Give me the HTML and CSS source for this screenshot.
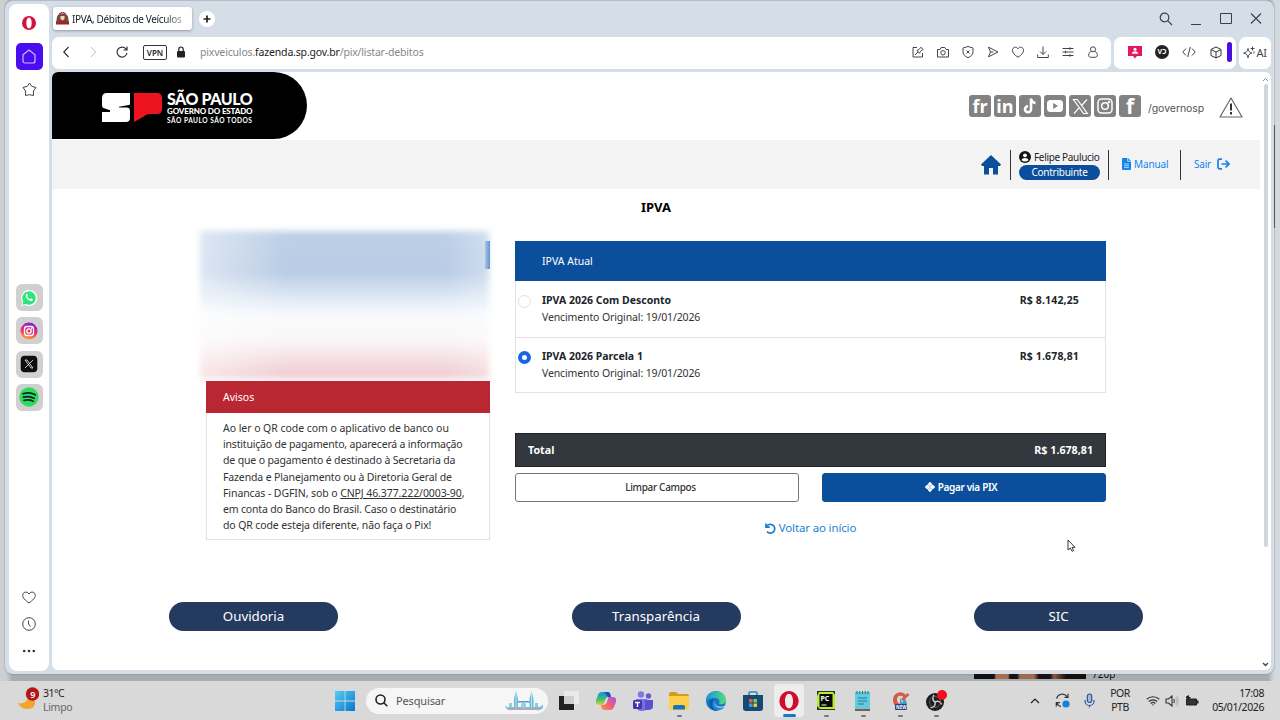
FILE: index.html
```html
<!DOCTYPE html>
<html lang="pt-BR">
<head>
    <meta charset="UTF-8">
    <meta name="viewport" content="width=device-width, initial-scale=1.0">
    <title>IPVA, Débitos de Veículos</title>
    <link rel="stylesheet" href="styles.css">
</head>
<body>
    <div class="desktop">
        <div class="window">
            <aside class="sidebar">
                <svg class="side-opera" width="14" height="14" viewBox="0 0 14 14"><path fill="#d4103c" fill-rule="evenodd" d="M7 0a7 7 0 1 0 0 14A7 7 0 0 0 7 0zm0 1.6c1.6 0 2.7 2.2 2.7 5.4S8.600 12.400 7 12.400 4.300 10.200 4.300 7 5.400 1.600 7 1.600z"/></svg>
                <div class="side-home"><svg width="14" height="15" viewBox="0 0 14 15" fill="none" stroke="#c9bcff" stroke-width="1.200" stroke-linejoin="round"><path d="M1 5.800 7 1l6 4.800V12a2 2 0 0 1-2 2H3a2 2 0 0 1-2-2z"/></svg></div>
                <svg class="side-star" width="15" height="15" viewBox="0 0 15 15" fill="none" stroke="#444" stroke-linejoin="round"><path d="M7.500 1 9.700 4.300 14 5.500 11.400 9 11.500 13.500 7.500 12.700 3.500 13.500 3.600 9 1 5.500 5.300 4.300z"/></svg>
                <div class="side-apps">
                    <div class="side-app"><svg width="18" height="18" viewBox="0 0 18 18"><path d="M1 17l1.200-4.300A8 8 0 1 1 5.500 16z" fill="#fff"/><path d="M2.300 15.800l1-3.300a6.700 6.700 0 1 1 2.500 2.400z" fill="#2ee57b"/><path d="M6.200 5.200c.8-.8 1.300-.1 1.600.7.300.8-.8 1-.5 1.500.6 1.300 1.500 2.100 2.700 2.700.6.200.9-1 1.500-.7 1.900.7 1.600 1.200.9 2-2.300 2.300-8.500-3.500-6.200-6.200z" fill="#fff"/></svg></div>
                    <div class="side-app"><svg width="18" height="18" viewBox="0 0 18 18"><defs><linearGradient id="insta" x1="0.300" y1="1" x2="0.600" y2="0"><stop offset="0" stop-color="#ffb02e"/><stop offset="0.450" stop-color="#f0306a"/><stop offset="1" stop-color="#7a22d8"/></linearGradient></defs><circle cx="9" cy="9" r="8.500" fill="url(#insta)"/><rect x="4.500" y="4.500" width="9" height="9" rx="2.500" fill="none" stroke="#fff" stroke-width="1.300"/><circle cx="9" cy="9" r="2.200" fill="none" stroke="#fff" stroke-width="1.300"/><circle cx="11.700" cy="6.300" r=".7" fill="#fff"/></svg></div>
                    <div class="side-app"><svg width="18" height="18" viewBox="0 0 18 18"><rect x=".7" y=".7" width="16.600" height="16.600" rx="4" fill="#0c0e10"/><path d="M5 5h2l6 8h-2zM13 5l-8 8" stroke="#ddd" stroke-width=".9" fill="none"/></svg></div>
                    <div class="side-app"><svg width="20" height="20" viewBox="0 0 20 20"><circle cx="10" cy="10" r="9.700" fill="#2fdc60"/><path d="M4 6.800c4-1.300 8.500-1 12.300 1M4.500 10.200c3.500-1 7.500-.7 10.700 1M5 13.300c3-.8 6.500-.5 9.200.9" fill="none" stroke="#123" stroke-width="1.800" stroke-linecap="round"/></svg></div>
                </div>
                <div class="side-bottom">
                    <svg width="14" height="13" viewBox="0 0 14 13" fill="none" stroke="#444"><path d="M7 12C3 9 .7 7 .7 4.300.7 1 5 -.3 7 3c2-3.300 6.300-2 6.300 1.300C13.300 7 11 9 7 12z"/></svg>
                    <svg width="14" height="14" viewBox="0 0 14 14" fill="none" stroke="#444"><circle cx="7" cy="7" r="6.300"/><path d="M6.500 3.500V7l2 2.500"/></svg>
                    <svg width="14" height="14" viewBox="0 0 14 14" fill="#333"><circle cx="2.200" cy="7" r="1.300"/><circle cx="7" cy="7" r="1.300"/><circle cx="11.800" cy="7" r="1.300"/></svg>
                </div>
            </aside>

            <div class="browser">
                <div class="tabs">
                    <div class="tab">
                        <svg width="13" height="13" viewBox="0 0 13 13"><path d="M1 5C1 .5 12 .5 12 5l1 6H0z" fill="#426044"/><circle cx="6.500" cy="5.500" r="4" fill="#a83232"/><path d="M0 9.500h13v3H0z" fill="#a51f24"/><path d="M4.500 4h4v3l-2 1.500-2-1.500z" fill="#ddb"/><path d="M3 2 6.500 0 10 2" stroke="#333" fill="none"/></svg>
                        <span>IPVA, Débitos de Veículos</span>
                    </div>
                    <div class="new-tab"><svg width="8" height="8" viewBox="0 0 8 8"><path d="M4 .5v7M.5 4h7" stroke="#222" stroke-width="1.700"/></svg></div>
                    <div class="window-buttons">
                        <svg width="14" height="14" viewBox="0 0 14 14" fill="none" stroke="#3b4046" stroke-width="1.200"><circle cx="5.500" cy="5.500" r="4.300"/><path d="M8.700 8.700 13 13"/></svg>
                        <svg width="14" height="14" viewBox="0 0 14 14" stroke="#3b4046"><path d="M2 12.500h10"/></svg>
                        <svg width="14" height="14" viewBox="0 0 14 14" fill="none" stroke="#3b4046"><path d="M1.500 1.500h11v10h-11z"/></svg>
                        <svg width="14" height="14" viewBox="0 0 14 14" stroke="#3b4046" stroke-width="1.100"><path d="M2 1.500l10 10M12 1.500l-10 10"/></svg>
                    </div>
                </div>

                <div class="toolbar">
                    <div class="address">
                        <svg width="14" height="14" viewBox="0 0 14 14" fill="none" stroke="#333" stroke-width="1.200"><path d="M8.500 2 3.800 7l4.700 5"/></svg>
                        <svg class="forward" width="14" height="14" viewBox="0 0 14 14" fill="none" stroke="#bbb"><path d="M5 2l4.700 5L5 12"/></svg>
                        <svg class="reload" width="14" height="14" viewBox="0 0 14 14" fill="none" stroke="#333" stroke-width="1.200"><path d="M12 8a5 5 0 1 1-1.200-4.300L12 5M12 1.500V5H8.500"/></svg>
                        <span class="vpn">VPN</span>
                        <svg class="lock" width="10" height="12" viewBox="0 0 10 12"><rect x="1" y="5" width="8" height="6.500" rx="1" fill="#222"/><path d="M2.800 5V3.200a2.200 2.200 0 0 1 4.400 0V5" fill="none" stroke="#222" stroke-width="1.200"/></svg>
                        <span class="url">pixveiculos.<b>fazenda.sp.gov.br</b>/pix/listar-debitos</span>
                        <div class="address-icons">
                            <svg viewBox="0 0 12 12"><path d="M5 1.500H1v9.500h9.500V7M3 9l3-3M5 4.500l2.500 2.800 1-2L11 3.500 9 1.200 7 3.500z"/></svg>
                            <svg viewBox="0 0 12 12"><path d="M.5 3.500H3l1.200-2h3.600l1.200 2h2.500v7.500H.5z"/><circle cx="6" cy="6.800" r="2.200"/></svg>
                            <svg viewBox="0 0 12 12"><path d="M6 .5 11 2v4c0 2.500-2 4.500-5 5.700C3 10.500 1 8.500 1 6V2zM4.500 4.500l3 3M7.500 4.500l-3 3"/></svg>
                            <svg viewBox="0 0 12 12"><path d="M1.500 1.200 11 6l-9.500 4.800 2-4.800zM3.500 6h3"/></svg>
                            <svg viewBox="0 0 12 12"><path d="M6 11.300C2.500 8.700.5 7 .5 4.300.5 1 4.500 0 6 2.800 7.500 0 11.500 1 11.500 4.300 11.500 7 9.500 8.700 6 11.300z"/></svg>
                            <svg viewBox="0 0 12 12"><path d="M6 .5v7.800M3 5.500l3 3 3-3M.7 8.500v3h10.600v-3"/></svg>
                            <svg viewBox="0 0 12 12"><path d="M.5 2.500h11M.5 6h11M.5 9.500h11M8 1.200v2.600M3.500 4.700v2.600M8 8.200v2.600"/></svg>
                            <svg viewBox="0 0 12 12"><circle cx="6" cy="3.300" r="2.500"/><path d="M4 5.500C1 6.500 1 11.300 3.500 11.300h5C11 11.300 11 6.500 8 5.500"/></svg>
                        </div>
                    </div>
                    <div class="extensions">
                        <svg width="14" height="13" viewBox="0 0 14 13"><path d="M0 0h14v10H9l-2 2.500L5 10H0z" fill="#e5185d"/><circle cx="7" cy="3.200" r="1.500" fill="#fff"/><path d="M3.800 7.800C4 4.500 10 4.500 10.200 7.800z" fill="#fff"/></svg>
                        <span class="vd">VƆ</span>
                        <svg width="14" height="12" viewBox="0 0 14 12" fill="none" stroke="#444"><path d="M4 2.500.8 6 4 9.500M10 2.500 13.200 6 10 9.500M8.300 1 5.700 11"/></svg>
                        <svg width="12" height="13" viewBox="0 0 12 13" fill="none" stroke="#333"><path d="M6 1l5 2.500v6L6 12 1 9.500v-6zM1 3.500 6 6l5-2.500M6 6v6"/></svg>
                        <i class="purple-bar"></i>
                    </div>
                    <div class="ai">
                        <svg width="13" height="13" viewBox="0 0 13 13" fill="none" stroke="#444"><path d="M5 2.500C5.500 5.500 6.500 6.300 9 7 6.500 7.700 5.500 8.500 5 11.800 4.500 8.500 3.500 7.700.7 7 3.500 6.300 4.500 5.500 5 2.500zM9.500.5v4M7.500 2.500h4M11 5.500v2"/></svg>AI
                    </div>
                </div>

                <div class="viewport">
                    <div class="page">
                        <header class="header">
                            <div class="logo">
                                <svg width="61" height="30" viewBox="0 0 61 30"><path d="M5 0h23v11q0 3-3 3 3 1 3 4v7q0 4-4 4H0V19h8v-2H5q-5 0-5-5V5q0-5 5-5z" fill="#fff"/><path d="M0 14.500 8 17.300v1L0 19zM28 14.500H17v-.8l11-2z" fill="#000"/><path d="M32 0h23q5 0 5 5v11q0 5-5 5h-7q-4 0-7 3l-9 5z" fill="#ed1420"/></svg>
                                <div class="logo-text">
                                    <b>SÃO PAULO</b>
                                    <strong>GOVERNO DO ESTADO</strong>
                                    <small>SÃO PAULO SÃO TODOS</small>
                                </div>
                            </div>
                            <div class="social">
                                <span>fr</span>
                                <span>in</span>
                                <span><svg width="16" height="18" viewBox="0 0 16 18" fill="none" stroke="#fff" stroke-width="2.600"><path d="M9 1.500v10.700a3 3 0 1 1-3-3M9 2c.5 2.500 2 3.700 4.500 4"/></svg></span>
                                <span><svg width="16" height="12" viewBox="0 0 16 12"><rect width="16" height="12" rx="3.500" fill="#fff"/><path d="M6.200 3v6l4.800-3z" fill="#828282"/></svg></span>
                                <span><svg width="17" height="17" viewBox="0 0 17 17" fill="none" stroke="#fff" stroke-width="1.200"><path d="M1.500 1.500h3.800l10 14h-3.800zM15 1.500 9.600 7.500M7.300 9.700 2 15.500"/></svg></span>
                                <span><svg width="16" height="16" viewBox="0 0 16 16" fill="none" stroke="#fff" stroke-width="1.500"><rect x="1" y="1" width="14" height="14" rx="3.500"/><circle cx="8" cy="8" r="3.300"/><circle cx="12" cy="4" r=".5"/></svg></span>
                                <span class="face">f</span>
                                <em>/governosp</em>
                                <svg class="warn" width="24" height="21" viewBox="0 0 24 21" fill="none" stroke="#666" stroke-width="1.200" stroke-linejoin="round"><path d="M12 1 23 20H1z"/><path d="M12 6.500v7M12 15v2.500" stroke="#333" stroke-width="2"/></svg>
                            </div>
                        </header>

                        <nav class="navbar">
                            <svg class="home" width="20" height="20" viewBox="0 0 20 20" fill="#0b4f9c"><path d="M10 0 20 9.500 19 11H17v8.500h-5V13H8v6.500H3V11H1L0 9.500z"/></svg>
                            <div class="user">
                                <div class="user-name"><svg width="12" height="12" viewBox="0 0 12 12"><circle cx="6" cy="6" r="6" fill="#151515"/><circle cx="6" cy="4.300" r="1.900" fill="#fff"/><path d="M2.500 9.300c.6-3 6.400-3 7 0C7.500 11 4.500 11 2.500 9.300z" fill="#fff"/></svg><span>Felipe Paulucio</span></div>
                                <div class="badge">Contribuinte</div>
                            </div>
                            <a class="manual"><svg width="9" height="12" viewBox="0 0 9 12"><path d="M1 0h5l3 3v8q0 1-1 1H1q-1 0-1-1V1q0-1 1-1z" fill="#1184ee"/><path d="M5.700 0v3.300H9M2 6h5M2 7.800h5M2 9.600h5" stroke="#d5eaff" stroke-width=".8" fill="none"/></svg><span>Manual</span></a>
                            <a class="exit"><span>Sair</span><svg width="13" height="12" viewBox="0 0 13 12" fill="none" stroke="#1184ee" stroke-width="1.700"><path d="M5 1.200H2.500Q1 1.200 1 2.700v6.600q0 1.500 1.500 1.500H5M4.500 6h7M8.500 2.700 12 6 8.500 9.300"/></svg></a>
                        </nav>

                        <h1>IPVA</h1>

                        <main class="content">
                            <section class="left">
                                <div class="vehicle">
                                    <div class="vehicle-blur"></div>
                                    <i class="vehicle-edge"></i>
                                </div>
                                <h2>Avisos</h2>
                                <p>
                                    <span class="l1">Ao ler o QR code com o aplicativo de banco ou</span><br>
                                    <span class="l2">instituição de pagamento, aparecerá a informação</span><br>
                                    <span class="l3">de que o pagamento é destinado à Secretaria da</span><br>
                                    <span class="l4">Fazenda e Planejamento ou à Diretoria Geral de</span><br>
                                    <span class="l5">Financas - DGFIN, sob o <u>CNPJ 46.377.222/0003-90</u>,</span><br>
                                    <span class="l6">em conta do Banco do Brasil. Caso o destinatário</span><br>
                                    <span class="l7">do QR code esteja diferente, não faça o Pix!</span>
                                </p>
                            </section>

                            <section class="right">
                                <div class="debts">
                                    <h2>IPVA Atual</h2>
                                    <div class="debt">
                                        <i class="radio"></i>
                                        <div><b>IPVA 2026 Com Desconto</b><span>Vencimento Original: 19/01/2026</span></div>
                                        <strong>R$ 8.142,25</strong>
                                    </div>
                                    <div class="debt">
                                        <i class="radio checked"></i>
                                        <div><b>IPVA 2026 Parcela 1</b><span>Vencimento Original: 19/01/2026</span></div>
                                        <strong>R$ 1.678,81</strong>
                                    </div>
                                </div>
                                <div class="total"><span>Total</span><span>R$ 1.678,81</span></div>
                                <div class="actions">
                                    <button class="clear">Limpar Campos</button>
                                    <button class="pay"><svg width="10" height="10" viewBox="0 0 10 10"><path d="M5 0l5 5-5 5-5-5z" fill="#fff" stroke="#fff" stroke-linejoin="round" stroke-width=".5"/><path d="M2 2.500h1L5 4.500l2-2h1M2 7.500h1L5 5.500l2 2h1" fill="none" stroke="#0b4f9c" stroke-width=".5"/></svg>Pagar via PIX</button>
                                </div>
                                <a class="back"><svg width="11" height="11" viewBox="0 0 11 11" fill="none" stroke="#1b7fd0" stroke-width="1.700"><path d="M1 .5v3.700h3.800M1.300 4A4.400 4.400 0 1 1 2 8.600"/></svg><span>Voltar ao início</span></a>
                            </section>
                        </main>

                        <footer class="footer">
                            <a>Ouvidoria</a>
                            <a>Transparência</a>
                            <a>SIC</a>
                        </footer>
                    </div>
                    <div class="scrollbar">
                        <svg width="7" height="5" viewBox="0 0 7 5" fill="none" stroke="#888"><path d="M1 4l2.500-2.500L6 4"/></svg>
                        <i></i>
                        <svg class="down" width="7" height="5" viewBox="0 0 7 5" fill="none" stroke="#444" stroke-width="1.400"><path d="M1 1l2.500 2.500L6 1"/></svg>
                    </div>
                </div>
            </div>
        </div>

        <!-- janela que fica por trás do navegador -->
        <div class="behind-photo"></div>
        <div class="behind-text">720p</div>
        <div class="behind-scroll"></div>
        <svg class="cursor" width="9" height="13" viewBox="0 0 9 13"><path d="M1 1v10l2.300-2 1.800 3.300 1.500-.8-1.600-3.200H8z" fill="#fff" stroke="#222" stroke-width=".9"/></svg>

        <div class="taskbar">
            <div class="weather">
                <svg width="21" height="24" viewBox="0 0 21 24"><path d="M0 16c6 1 9-1 10-6 10 0 9 12 0 12-5 0-8-2-10-6z" fill="#f5a52d"/><circle cx="14.500" cy="7" r="6.700" fill="#b3161d"/><text x="14.500" y="10.600" text-anchor="middle" class="weather-count">9</text></svg>
                <div><span>31°C</span><span class="muted">Limpo</span></div>
            </div>
            <div class="start">
                <svg width="20" height="20" viewBox="0 0 20 20"><defs><linearGradient id="win" x1="0" y1="0" x2="1" y2="1"><stop offset="0" stop-color="#55cdf5"/><stop offset="1" stop-color="#0878cd"/></linearGradient></defs><path d="M0 0h9.600v9.600H0zM10.400 0H20v9.600h-9.600zM0 10.400h9.600V20H0zM10.400 10.400H20V20h-9.600z" fill="url(#win)"/></svg>
            </div>
            <div class="search">
                <svg width="13" height="13" viewBox="0 0 13 13" fill="none" stroke="#222" stroke-width="1.600"><circle cx="5.500" cy="5.500" r="4.500"/><path d="M8.800 8.800 12.300 12.300"/></svg>
                <span>Pesquisar</span>
                <svg class="towers" width="40" height="21" viewBox="0 0 40 21"><path d="M1 15q2 3 5 2h28q4 0 5-3v4q-3 3-7 2H8q-6 1-7-5z" fill="#79bfd6"/><path d="M10 18V9l2-8 2 8v9zM25.500 18V9l2-8 2 8v9z" fill="#69b9d9"/><path d="M12 2v16M27.500 2v16" stroke="#b8e3ef"/><path d="M14 11h11.500v1.500H14z" fill="#4aa0c6"/><path d="M17 18v-4l2.500-2 2.500 2v4zM5 17v-4h3v4zM31 17v-4h3v4z" fill="#91cfe0"/><path d="M4 19h32" stroke="#d39c9f" stroke-width="1.300"/></svg>
            </div>
            <div class="apps">
                <div class="app"><svg width="20" height="20" viewBox="0 0 20 20"><path d="M0 5h15v14H0z" fill="#222"/><path d="M5 0h15v13H5z" fill="#ececec" opacity=".85"/></svg></div>
                <div class="app"><svg width="20" height="20" viewBox="0 0 20 20"><defs><linearGradient id="cop1" x1="0" y1="0" x2="0" y2="1"><stop offset="0" stop-color="#168fe0"/><stop offset=".6" stop-color="#41c36b"/><stop offset="1" stop-color="#e8cf30"/></linearGradient><linearGradient id="cop2" x1="1" y1="0" x2="0" y2="1"><stop offset="0" stop-color="#9b5ae0"/><stop offset=".5" stop-color="#ef5a86"/><stop offset="1" stop-color="#fb9447"/></linearGradient></defs><path d="M6 1h6q2 0 2.700 3L15 6h-3q-2 0-3 3l-1.500 5H3q-4 0-3-5l2-5q1-3 4-3z" fill="url(#cop1)"/><path d="M14 19H8q-2 0-2.700-3L5 14h3q2 0 3-3l1.500-5H17q4 0 3 5l-2 5q-1 3-4 3z" fill="url(#cop2)"/><path d="M8 1h4q2 0 3 5h-3z" fill="#1b4fc4"/></svg></div>
                <div class="app"><svg width="20" height="20" viewBox="0 0 20 20"><circle cx="8" cy="3.500" r="3.200" fill="#8077e8"/><circle cx="15.500" cy="5" r="2.700" fill="#625ad7"/><path d="M3 8h11v8q0 4-5 4t-6-4z" fill="#776ee2"/><path d="M12 9h8v6q0 4-5 4h-3z" fill="#5a50d0"/><rect y="9" width="9" height="9" rx="1.500" fill="#3f36ae"/><path d="M2 11.500h5M4.500 11.500V16" stroke="#fff" stroke-width="1.400"/></svg></div>
                <div class="app open"><svg width="20" height="20" viewBox="0 0 20 20"><path d="M0 3q0-2 2-2h5l2 2h9q2 0 2 2v4H0z" fill="#d99a1c"/><path d="M0 5h20v12q0 2-2 2H2q-2 0-2-2z" fill="#fdd04c"/><path d="M4 18.500v-3q0-1.500 2-1.500h8q2 0 2 1.500v3z" fill="#1973b9"/></svg></div>
                <div class="app"><svg width="20" height="20" viewBox="0 0 20 20"><defs><linearGradient id="edge" x1="0" y1="0" x2="1" y2="0"><stop offset="0" stop-color="#1894dc"/><stop offset="1" stop-color="#57dc79"/></linearGradient></defs><circle cx="10" cy="10" r="10" fill="#1278c8"/><path d="M0 9C1-3 20-2 20 9c0 4-4 5-7 4 1-2 1-6-4-6-4 0-8 1-9 4z" fill="url(#edge)"/><path d="M9.500 10c-2.500 4 3 7 9 5l1.500-1-1 3-4 3c-6 0-9-7-5.500-10z" fill="#d9d9d9"/><path d="M5 17C1 11 5 7 8 8c-3 3-2 8 3 12-2 0-4-1-6-3z" fill="#0c59a4"/><path d="M9.500 10c-3 5 3 8.500 9 6-4 5-11 4-12-1-.3-3 1-5 3-5z" fill="#1a8ad8"/></svg></div>
                <div class="app"><svg width="20" height="20" viewBox="0 0 20 20"><path d="M6 4V2q0-1 1-1h6q1 0 1 1v2" fill="none" stroke="#2689c9" stroke-width="1.600"/><path d="M0 4h20v13q0 3-3 3H3q-3 0-3-3z" fill="#154a75"/><path d="M6 8h3.500v3.500H6z" fill="#f25b30"/><path d="M10.500 8H14v3.500h-3.500z" fill="#8bc83f"/><path d="M6 12.500h3.500V16H6z" fill="#26a2e5"/><path d="M10.500 12.500H14V16h-3.500z" fill="#fbc229"/></svg></div>
                <div class="app active"><svg width="20" height="20" viewBox="0 0 20 20"><path fill="#d10d2e" fill-rule="evenodd" d="M10 0a9.700 10 0 1 0 0 20 9.700 10 0 0 0 0-20zm0 2.700c2.500 0 4 3.100 4 7.300s-1.500 7.300-4 7.300S6 14.200 6 10s1.500-7.300 4-7.300z"/></svg></div>
                <div class="app open"><svg width="18" height="19" viewBox="0 0 18 19"><path d="M0 0h18v19H0z" fill="#263421"/><path d="M2 1h14l2 3v14H3l-3-3V5z" fill="#b9ee2f"/><path d="M2.500 3h13v13h-13z" fill="#080b08"/><text x="3.500" y="9.500" class="pc">PC</text><path d="M4.500 14h5" stroke="#fff"/></svg></div>
                <div class="app open"><svg width="17" height="20" viewBox="0 0 17 20"><path d="M1 1h15v17H1z" fill="#62cbe0"/><path d="M1 18h15v2H1z" fill="#8b5a45"/><path d="M3 0v3M5.700 0v3M8.500 0v3M11.200 0v3M14 0v3" stroke="#286f89"/><path d="M4 7h9M4 10h9M4 13h6" stroke="#237c94" stroke-width="1.200"/></svg></div>
                <div class="app open"><svg class="ccleaner" width="18" height="20" viewBox="0 0 18 20"><path d="M14 4C8-2 1 3 1 9s5 9 10 6l-1-2.500c-3 1-5-1-5-4 0-4 4-5 7-2z" fill="#d35b46"/><path d="M8 6l2 6 3-5 2 6H8z" fill="#3f9fc2"/><path d="M10 9l6.500-6" stroke="#d35b46" stroke-width="2.500"/><rect x="3" y="13" width="12" height="6" rx="1" fill="#23487c"/><text x="4" y="17.800" class="new">NEW</text></svg></div>
                <div class="app open"><svg width="21" height="21" viewBox="0 0 21 21"><circle cx="9" cy="12" r="9" fill="#1d1d1f"/><path d="M8 5c-2 3-1 6 1 7M9 12c3-2 6 0 6.500 2.500M9 12c1 3-1 6-4.500 5.500" fill="none" stroke="#ccc" stroke-width="1.500"/><circle cx="9" cy="12" r="5.500" fill="none" stroke="#777" stroke-width=".7"/><circle cx="16" cy="5" r="5" fill="#f4101b"/></svg></div>
            </div>
            <div class="tray">
                <svg class="tray-up" width="10" height="8" viewBox="0 0 10 8" fill="none" stroke="#222" stroke-width="1.200"><path d="M1 6l4-4 4 4"/></svg>
                <svg class="tray-sync" width="15" height="15" viewBox="0 0 15 15" fill="none" stroke="#333" stroke-width="1.200"><path d="M1.500 5.500A6 6 0 0 1 12 3.500M13 .7v3.600H9.500M6 13.500A6 6 0 0 1 1.700 10M1.300 13.500V9.700H5"/><circle cx="11" cy="11" r="3.600" fill="#1680d2" stroke="none"/></svg>
                <svg class="tray-mic" width="11" height="15" viewBox="0 0 11 15" fill="none" stroke="#2f5695" stroke-width="1.200"><rect x="3.300" y="1" width="4.400" height="8.500" rx="2.200" fill="#a8b8d6"/><path d="M1 7v1a4.500 4.500 0 0 0 9 0V7M5.500 12.300V14.500"/></svg>
                <div class="lang"><span>POR</span><span>PTB</span></div>
                <svg class="tray-wifi" width="14" height="11" viewBox="0 0 14 11" fill="none" stroke="#333" stroke-width="1.200"><path d="M.7 4.300a9 9 0 0 1 12.600 0M2.800 6.500a6 6 0 0 1 8.400 0M4.700 8.600a3.300 3.300 0 0 1 4.600 0"/><circle cx="7" cy="9.800" r=".7" fill="#333" stroke="none"/></svg>
                <svg class="tray-sound" width="14" height="12" viewBox="0 0 14 12" fill="none" stroke="#333" stroke-width="1.100"><path d="M1 4h2.500L7 1v10L3.500 8H1zM8.700 4q1.200 2 0 4"/><path d="M10.500 2.500q2.500 3.500 0 7M12 1q2.500 5 0 10" stroke="#b5b5b5"/></svg>
                <svg class="tray-battery" width="14" height="12" viewBox="0 0 14 12"><path d="M1.500 4h10v6h-10z" fill="#333" stroke="#222"/><path d="M12 5.500h1.500v3H12zM1 1.500 4 0v2h2L3 5.500V3.500H1z" fill="#222"/></svg>
                <div class="clock"><span>17:08</span><span>05/01/2026</span></div>
            </div>
        </div>
    </div>
</body>
</html>
```

FILE: styles.css
```css
* {
    box-sizing: border-box;
}

body {
    margin: 0;
    font-family: 'Noto Sans', 'Open Sans', sans-serif;
    color: #212529;
    overflow: hidden;
}

h1, h2, p {
    margin: 0;
}

svg {
    display: block;
    flex: none;
}

.desktop {
    position: relative;
    width: 1280px;
    height: 720px;
    display: flex;
    flex-direction: column;
    background: linear-gradient(90deg, #cdd0d2 0, #cdd0d2 6px, #a9adb0 12px, #a9adb0 1268px, #d3d9de 1274px);
}

.window {
    height: 674px;
    width: 1269px;
    margin: 0 0 7px 5px;
    padding: 4px 3px 4px 4px;
    display: flex;
    gap: 3px;
    background: #d5dee7;
    border-radius: 8px;
    border-top: 1px solid #b3bcc7;
    box-shadow: 0 0 2px #7b8289;
}

/* barra lateral */
.sidebar {
    width: 40px;
    margin-top: -1px;
    height: 667px;
    background: #fff;
    border-radius: 8px;
    display: flex;
    flex-direction: column;
    align-items: center;
    flex: none;
}

.side-opera {
    margin-top: 12px;
}

.side-home {
    width: 27px;
    height: 27px;
    margin-top: 13px;
    background: #4a0df0;
    border-radius: 5px;
    display: grid;
    place-items: center;
}

.side-star {
    margin-top: 12px;
}

.side-apps {
    margin-top: 187px;
    display: grid;
    gap: 6.300px;
}

.side-app {
    width: 27px;
    height: 27px;
    background: #d0d0d0;
    border-radius: 6px;
    display: grid;
    place-items: center;
}

.side-bottom {
    margin-top: auto;
    margin-bottom: 13px;
    display: grid;
    gap: 13px;
}

.browser {
    flex: 1;
    min-width: 0;
    display: flex;
    flex-direction: column;
}

.tabs {
    height: 32px;
    display: flex;
    align-items: flex-start;
    padding: 2px 8px 0 1px;
}

.tab {
    width: 139px;
    height: 23px;
    padding: 0 4px 0 3px;
    background: #fff;
    border-radius: 3px;
    box-shadow: 0 1px 3px #9099a3;
    display: flex;
    align-items: center;
    gap: 3px;
    font-size: 10px;
    letter-spacing: -0.350px;
    white-space: nowrap;
}

.tab span {
    -webkit-mask-image: linear-gradient(90deg, #000 82%, rgba(0, 0, 0, 0.4));
    mask-image: linear-gradient(90deg, #000 82%, rgba(0, 0, 0, 0.4));
}

.new-tab {
    width: 16px;
    height: 16px;
    margin: 4px 0 0 7px;
    background: #fff;
    border-radius: 50%;
    display: grid;
    place-items: center;
}

.window-buttons {
    margin: 5px 0 0 auto;
    display: flex;
    gap: 16px;
}

.toolbar {
    height: 32px;
    display: flex;
    gap: 3px;
}

.address,
.extensions,
.ai {
    padding-bottom: 2px;
    background: #fff;
    border-radius: 7px;
    display: flex;
    align-items: center;
}

.address {
    width: 1059px;
    padding-left: 8px;
    padding-right: 6px;
}

.forward {
    margin-left: 12px;
}

.reload {
    margin-left: 15px;
}

.vpn {
    width: 24px;
    height: 15px;
    margin-left: 14px;
    border: 1px solid #333;
    border-radius: 2px;
    font-size: 8px;
    font-weight: 600;
    line-height: 13px;
    text-align: center;
}

.lock {
    margin-left: 9px;
}

.url {
    margin-left: 14px;
    font-size: 10.500px;
    letter-spacing: -0.170px;
    color: #83888d;
}

.url b {
    font-weight: 400;
    color: #222;
}

.address-icons {
    margin-left: auto;
    display: grid;
    grid-template-columns: repeat(8, 25px);
    justify-items: center;
}

.address-icons svg {
    width: 12px;
    height: 12px;
    fill: none;
    stroke: #444;
}

.extensions {
    width: 122px;
    padding-left: 14px;
}

.extensions svg:nth-of-type(2) {
    margin-left: 13px;
}

.extensions svg:nth-of-type(3) {
    margin-left: 14px;
}

.vd {
    width: 14px;
    height: 14px;
    margin-left: 13px;
    background: #222;
    border-radius: 50%;
    color: #fff;
    font-size: 7px;
    font-weight: 700;
    line-height: 13px;
    text-align: center;
}

.purple-bar {
    width: 5px;
    height: 20px;
    margin-left: 5px;
    background: #4b10df;
    border-radius: 3px;
}

.ai {
    flex: 1;
    justify-content: center;
    font-size: 11px;
    letter-spacing: -0.300px;
    color: #444;
}

/* página */
.viewport {
    height: 598px;
    margin-top: 3px;
    display: flex;
    background: #fff;
    border-radius: 6px;
    overflow: hidden;
}

.page {
    width: 1208px;
    flex: none;
}

.header {
    height: 68px;
    display: flex;
    justify-content: space-between;
}

.logo {
    width: 255px;
    height: 67px;
    padding: 4px 0 0 50px;
    background: #000;
    border-radius: 0 34px 34px 0;
    color: #fff;
    display: flex;
    align-items: center;
    gap: 4px;
}

.logo-text {
    display: grid;
    font-family: Lato, sans-serif;
    white-space: nowrap;
}

.logo-text b {
    font-size: 16px;
    font-weight: 900;
    line-height: 16px;
    letter-spacing: -0.450px;
}

.logo-text strong {
    font-size: 8px;
    font-weight: 900;
    line-height: 9px;
    letter-spacing: -0.150px;
}

.logo-text small {
    font-size: 6.600px;
    font-weight: 700;
    line-height: 9px;
    letter-spacing: 0.500px;
}

.social {
    display: flex;
    gap: 3px;
    padding: 23px 17px 0 0;
}

.social span {
    width: 22px;
    height: 22px;
    background: #828282;
    border-radius: 3px;
    color: #fff;
    display: grid;
    place-items: center;
    font: 700 18px/20px 'Open Sans', sans-serif;
}

.social .face {
    font-size: 21px;
}

.social em {
    width: 56px;
    margin: 6px 0 0 4px;
    font: 10.500px/16px Inter, sans-serif;
    letter-spacing: -0.050px;
    color: #555;
}

.warn {
    margin: 2px 0 0 12px;
}

.navbar {
    height: 49px;
    padding-right: 30px;
    background: #f3f3f3;
    display: flex;
    justify-content: flex-end;
    align-items: center;
    font-size: 10px;
}

.home {
    margin-right: 9px;
}

.user,
.manual,
.exit {
    height: 30px;
    border-left: 1px solid #333;
}

.user {
    width: 98px;
    padding: 0 8px;
}

.user-name {
    display: flex;
    gap: 3px;
    line-height: 15px;
    align-items: center;
    white-space: nowrap;
    letter-spacing: -0.330px;
}

.badge {
    height: 15px;
    background: #0b4f9c;
    border-radius: 8px;
    color: #fff;
    line-height: 15px;
    text-align: center;
    letter-spacing: -0.250px;
}

.manual,
.exit {
    padding-bottom: 2px;
    color: #1184ee;
    display: flex;
    align-items: center;
}

.manual {
    width: 72px;
    padding-left: 13px;
    gap: 3px;
    letter-spacing: -0.150px;
}

.exit {
    width: 50px;
    padding-left: 13px;
    justify-content: space-between;
    letter-spacing: -0.200px;
}

h1 {
    height: 52px;
    font-size: 13px;
    line-height: 36px;
    text-align: center;
    color: #000;
}

.content {
    display: grid;
    grid-template-columns: 284px 591px;
    column-gap: 25px;
    justify-content: center;
    height: 361px;
}

.left h2,
.debts h2 {
    font-size: 10.500px;
    font-weight: 400;
    color: #fff;
}

.vehicle {
    height: 140px;
    position: relative;
}

.vehicle-blur {
    position: absolute;
    inset: -10px 1px 2px -6px;
    background:
        linear-gradient(90deg, rgba(255, 255, 255, 0.5) 0, rgba(255, 255, 255, 0) 30%, rgba(255, 255, 255, 0) 85%, rgba(255, 255, 255, 0.3) 100%),
        linear-gradient(180deg, #bdd0e7 0, #b9cce5 28%, #dfe9f5 45%, #f8fafd 57%, #fbf6f7 74%, #f0cfd4 96%);
    filter: blur(3px);
}

.vehicle-edge {
    position: absolute;
    top: 0;
    right: 0;
    width: 5px;
    height: 28px;
    background: linear-gradient(90deg, #aac4e2, #6594cf);
}

.left h2 {
    position: relative;
    height: 32px;
    padding-left: 17px;
    background: #b92832;
    line-height: 33px;
}

.left p {
    height: 127px;
    padding: 7px 0 0 16px;
    border: 1px solid #e2e2e2;
    border-top: 0;
    font-size: 10.500px;
    line-height: 16.200px;
    white-space: nowrap;
    color: #333;
}

/* ajuste fino da largura de cada linha do aviso */
.l1 { letter-spacing: -0.050px; }
.l2 { letter-spacing: -0.190px; }
.l3 { letter-spacing: -0.150px; }
.l4 { letter-spacing: -0.140px; }
.l5 { letter-spacing: -0.090px; }
.l6 { letter-spacing: -0.165px; }
.l7 { letter-spacing: -0.110px; }

.debts {
    height: 152px;
    border: 1px solid #e2e2e2;
    border-top: 0;
}

.debts h2 {
    height: 40px;
    margin: 0 -1px;
    padding-left: 27px;
    background: #0b4f9c;
    line-height: 40px;
}

.debt {
    height: 56px;
    padding: 11px 26px 0 2px;
    display: flex;
    font-size: 10.500px;
    line-height: 16.500px;
}

.debt + .debt {
    border-top: 1px solid #e2e2e2;
    padding-top: 10px;
}

.debt b,
.debt span {
    display: block;
}

.debt span {
    letter-spacing: -0.130px;
    color: #333;
}

.debt strong {
    margin-left: auto;
    letter-spacing: 0.150px;
}

.radio {
    width: 13px;
    height: 13px;
    margin: 3px 11px 0 0;
    border: 1px solid #e2e2e2;
    border-radius: 50%;
}

.radio.checked {
    border: 4px solid #1a66e0;
}

.total {
    height: 34px;
    margin-top: 40px;
    padding: 0 12px;
    background: #32383e;
    border: 1px solid #222;
    color: #fff;
    display: flex;
    justify-content: space-between;
    font-size: 10.700px;
    font-weight: 700;
    line-height: 33px;
}

.actions {
    display: grid;
    grid-template-columns: 1fr 1fr;
    gap: 23px;
    margin-top: 6px;
}

.actions button {
    height: 29px;
    padding: 0 0 1px 7px;
    border: 1px solid #777;
    border-radius: 3px;
    background: #fff;
    font: 500 10px/20px 'Noto Sans', 'Open Sans', sans-serif;
    letter-spacing: -0.330px;
    color: #333;
    display: flex;
    align-items: center;
    justify-content: center;
    gap: 3px;
}

.actions .pay {
    padding-left: 0;
    padding-right: 8px;
    background: #0b4f9c;
    border-color: #0b4f9c;
    color: #fff;
    font-weight: 600;
    padding: 0 6px 1px 0;
}

.back {
    margin-top: 17px;
    color: #1b7fd0;
    display: flex;
    align-items: center;
    justify-content: center;
    gap: 3px;
    font-size: 11.500px;
    line-height: 18px;
    letter-spacing: -0.150px;
}

.footer {
    padding: 0 117px;
    display: flex;
    justify-content: space-between;
}

.footer a {
    width: 169px;
    height: 29px;
    background: #243b5f;
    border-radius: 15px;
    color: #fff;
    font-size: 13.300px;
    line-height: 29px;
    text-align: center;
}

.scrollbar {
    width: 11px;
    padding: 5px 0 3px;
    display: flex;
    flex-direction: column;
    align-items: center;
}

.scrollbar i {
    width: 4px;
    height: 463px;
    margin-top: 2px;
    background: #ced7dd;
    border-radius: 2px;
}

.scrollbar .down {
    margin-top: auto;
}

.behind-photo {
    position: absolute;
    left: 974px;
    top: 674px;
    width: 112px;
    height: 5px;
    background: linear-gradient(90deg, #111 0 20px, #a56f50 22px 34px, #181212 36px 43px, #9d6b50 46px 60px, #151313 65px 76px, #8c5941 80px, #15100e 92px);
}

.behind-text {
    position: absolute;
    left: 1092px;
    top: 674px;
    height: 6px;
    overflow: hidden;
    font-size: 10px;
    line-height: 0;
    color: #111;
}

.behind-scroll {
    position: absolute;
    left: 1274px;
    top: 125px;
    width: 1px;
    height: 103px;
    background: #53585c;
}

.cursor {
    position: absolute;
    left: 1067px;
    top: 539px;
}

/* barra de tarefas */
.taskbar {
    height: 39px;
    background: #d9d9d9;
    display: flex;
    align-items: center;
    font-size: 10.500px;
    color: #222;
}

.taskbar div > span {
    display: block;
}

.weather {
    width: 327px;
    padding-left: 18px;
    display: flex;
    gap: 4px;
    line-height: 13.500px;
    letter-spacing: -0.500px;
}

.weather-count {
    font-size: 9px;
    font-weight: 600;
    fill: #fff;
}

.muted {
    color: #666;
    letter-spacing: -0.300px;
}

.start {
    width: 39px;
    padding-left: 8px;
}

.search {
    width: 182px;
    height: 26px;
    padding: 0 4px 0 9px;
    background: #f6f6f6;
    border-radius: 13px;
    display: flex;
    align-items: center;
    gap: 8px;
    font-size: 11px;
    letter-spacing: -0.150px;
    color: #555;
}

.towers {
    margin-left: auto;
}

.apps {
    margin-left: 3px;
    display: grid;
    grid-template-columns: repeat(11, 36.700px);
}

.app {
    position: relative;
    height: 33px;
    display: grid;
    place-items: center;
}

.app.active {
    width: 30px;
    margin: 0 auto;
    background: #ededed;
    border-radius: 4px;
}

.ccleaner {
    margin-left: 3px;
}

.app.open::after,
.app.active::after {
    content: '';
    position: absolute;
    bottom: 0;
    left: 50%;
    width: 5px;
    height: 2px;
    margin-left: -2px;
    background: #777;
    border-radius: 2px;
}

.app.active::after {
    width: 13px;
    height: 3px;
    margin-left: -6px;
    background: #157cbb;
}

.pc {
    font-size: 7px;
    font-weight: 700;
    fill: #fff;
}

.new {
    font-size: 4.500px;
    font-weight: 700;
    fill: #fff;
}

.tray {
    margin-left: auto;
    padding-right: 16px;
    display: flex;
    align-items: center;
    line-height: 13.500px;
}

.tray-sync {
    margin-left: 15px;
}

.tray-mic {
    margin-left: 14px;
}

.lang {
    width: 26px;
    margin-left: 12px;
    text-align: center;
    letter-spacing: -0.500px;
}

.tray-wifi {
    margin-left: 13px;
}

.tray-sound {
    margin-left: 5px;
}

.tray-battery {
    margin-left: 6px;
}

.clock {
    width: 65px;
    text-align: right;
    letter-spacing: -0.400px;
}
```
